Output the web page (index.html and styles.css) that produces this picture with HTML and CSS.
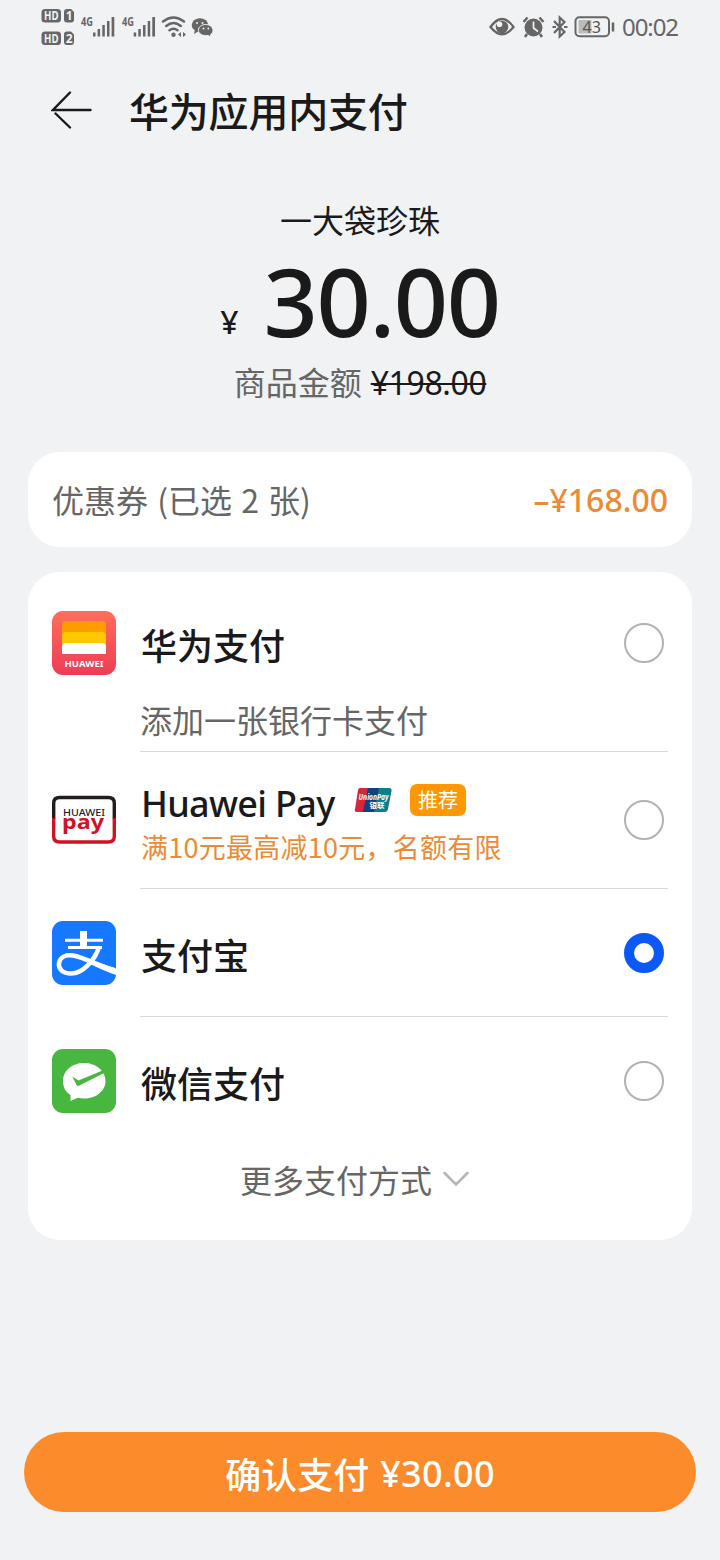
FILE: index.html
```html
<!DOCTYPE html>
<html lang="zh-CN">
<head>
<meta charset="utf-8">
<title>华为应用内支付</title>
<link rel="stylesheet" href="styles.css">
</head>
<body>
<div class="screen">
  <div class="status">
    <svg class="status-left" width="180" height="56" viewBox="0 0 180 56">
      <g fill="#666">
        <rect x="1.5" y="9" width="19.5" height="13.5" rx="3.5"/>
        <path d="M24 12q0-3 3-3h4l3 3v7.500q0 3-3 3h-4q-3 0-3-3z"/>
        <rect x="1.500" y="31.500" width="19.500" height="13.500" rx="3.500"/>
        <path d="M24 34.500q0-3 3-3h4l3 3v7.500q0 3-3 3h-4q-3 0-3-3z"/>
        <g id="bars">
          <rect x="53" y="32.500" width="2.500" height="4"/><rect x="57.600" y="29" width="2.500" height="7.500"/><rect x="62.300" y="25" width="2.500" height="11.500"/><rect x="67" y="21" width="2.500" height="15.500"/><rect x="71.600" y="17" width="2.700" height="19.500"/>
        </g>
        <use href="#bars" x="40.700"/>
        <circle cx="133.500" cy="34.700" r="2.200"/>
        <path d="M138 34.500l3-2.500v5zM146 34.500l-3-2.500v5z"/>
        <ellipse cx="160" cy="25" rx="8.300" ry="6.800"/><path d="M155 29l-1 5 5-3z"/>
      </g>
      <g fill="none" stroke="#666" stroke-width="2.500" stroke-linecap="round">
        <path d="M123 21.500q10.500-8 21 0M126.200 26q7.300-6 14.600 0M129.500 30.200q4-3 8 0"/>
      </g>
      <path d="M165.700 24.500c4.200 0 7.300 2.500 7.300 5.700 0 2-1 3.500-2.500 4.500l.5 2.300-3-1.500c-5 .8-9.600-1.700-9.600-5.300 0-3.200 3.200-5.700 7.300-5.700z" fill="#666" stroke="#f1f2f4" stroke-width="1"/>
      <g fill="#f1f2f4"><circle cx="157" cy="23" r="1"/><circle cx="162.500" cy="23" r="1"/><circle cx="163.500" cy="28.500" r=".9"/><circle cx="168.300" cy="28.500" r=".9"/></g>
      <g class="hd"><text x="4" y="20" textLength="14.500" lengthAdjust="spacingAndGlyphs">HD</text><text x="25.700" y="20">1</text><text x="4" y="42.500" textLength="14.500" lengthAdjust="spacingAndGlyphs">HD</text><text x="25.700" y="42.500">2</text></g>
      <g class="net"><text x="41" y="25.500" textLength="12" lengthAdjust="spacingAndGlyphs">4G</text><text x="82" y="25.500" textLength="12" lengthAdjust="spacingAndGlyphs">4G</text></g>
    </svg>
    <svg class="status-right" width="192" height="56" viewBox="0 0 192 56">
      <path d="M1.500 27q11.500-16 23 0q-11.500 14.500-23 0z" fill="none" stroke="#666" stroke-width="2.300"/>
      <circle cx="13" cy="27" r="6.300" fill="#666"/><circle cx="10.500" cy="24.300" r="2.800" fill="#f1f2f4"/>
      <circle cx="44.500" cy="27.500" r="9" fill="#666"/>
      <path d="M44.500 21.500v6.500l4.500 3.500" stroke="#f1f2f4" stroke-width="1.700" fill="none"/>
      <path d="M34.500 22l4-4.500M54.500 22l-4-4.500M38 34l-2 3M51 34l2 3" stroke="#666" stroke-width="2.500"/>
      <path d="M65 21l10.500 11-4.800 4.500v-19l4.800 4.500L65 33" fill="none" stroke="#666" stroke-width="2.200"/>
      <path d="M63.500 27h3.500M75 27h3.500" stroke="#666" stroke-width="2.200"/>
      <rect x="86.500" y="17.300" width="33.500" height="19" rx="4" fill="none" stroke="#666" stroke-width="2"/>
      <rect x="89.500" y="20" width="13" height="13.500" fill="#bbb"/>
      <path d="M124 22.500v9" stroke="#666" stroke-width="2.500"/>
      <text class="batt" x="93.500" y="33" textLength="18.500" lengthAdjust="spacingAndGlyphs">43</text>
      <text class="time" x="133" y="36" textLength="57">00:02</text>
    </svg>
  </div>

  <div class="header">
    <svg width="42" height="40" viewBox="0 0 42 40" fill="none" stroke="#1a1a1a" stroke-width="2.400" stroke-linecap="round"><path d="M39.500 20H2L19 2.500M4.500 23.500L19 37.500"/></svg>
    <h1 class="header-title">华为应用内支付</h1>
  </div>

  <div class="summary">
    <div class="product">一大袋珍珠</div>
    <div class="price"><span class="yen">¥</span><span class="amount">30.00</span></div>
    <div class="original"><span class="original-label">商品金额</span><s class="original-price">¥198.00</s></div>
  </div>

  <div class="card coupon"><span class="coupon-label">优惠券 (已选 2 张)</span><span class="discount">–¥168.00</span></div>

  <div class="card methods">
    <div class="method first">
      <div class="main">
        <svg class="logo" width="64" height="64" viewBox="0 0 64 64">
          <defs><linearGradient id="red" x1="0" y1="0" x2="0" y2="1"><stop offset="0" stop-color="#ff6e5c"/><stop offset="1" stop-color="#ef3c55"/></linearGradient></defs>
          <rect width="64" height="64" rx="11" fill="url(#red)"/>
          <path d="M10 43V14q0-4 4-4h36q4 0 4 4v29z" fill="#ff9c00"/>
          <path d="M10 43V25q0-4 4-4h36q4 0 4 4v18z" fill="#ffc800"/>
          <path d="M10 43v-7q0-4 4-4h36q4 0 4 4v7z" fill="#fff"/>
          <text class="brand" x="12.500" y="56" textLength="39" lengthAdjust="spacingAndGlyphs">HUAWEI</text>
        </svg>
        <span class="name">华为支付</span><i class="radio"></i>
      </div>
      <div class="add-card">添加一张银行卡支付</div>
    </div>
    <div class="method pay">
      <svg class="logo" width="64" height="50" viewBox="0 0 64 50">
        <path d="M1.700 24V8q0-5.500 6-5.500h48.600q6 0 6 5.500v16" fill="none" stroke="#231c1e" stroke-width="3.400"/>
        <path d="M1.700 23v18.500q0 5.500 6 5.500h48.600q6 0 6-5.500V23" fill="none" stroke="#cf1226" stroke-width="3.400"/>
        <text class="hw" x="11" y="20.500" textLength="42" lengthAdjust="spacingAndGlyphs">HUAWEI</text>
        <text class="pay-word" x="10" y="34" textLength="42" lengthAdjust="spacingAndGlyphs">pay</text>
      </svg>
      <div class="info">
        <div class="line"><span class="name latin">Huawei Pay</span>
          <svg class="union" width="38" height="26" viewBox="0 0 38 26">
            <path d="M6 1h13l-5 24H3q-3 0-2-3L4 3q.5-2 2-2z" fill="#d5263c"/><path d="M14 1h14l-5 24H9z" fill="#10427c"/><path d="M25 1h10q3 0 2.500 3L34 22q-.7 3-3 3H20z" fill="#08818b"/>
            <text class="union-en" x="4.500" y="12.500" textLength="30" lengthAdjust="spacingAndGlyphs">UnionPay</text>
            <text class="union-cn" x="15.500" y="20.500" textLength="15" lengthAdjust="spacingAndGlyphs">银联</text>
          </svg>
          <span class="badge">推荐</span></div>
        <div class="promo">满10元最高减10元，名额有限</div>
      </div>
      <i class="radio"></i>
    </div>
    <div class="method">
      <svg class="logo" width="64" height="64" viewBox="0 0 64 64">
        <rect width="64" height="64" rx="11" fill="#1677ff"/>
        <g fill="none" stroke="#fff"><path d="M31.500 10v16" stroke-width="7"/><path d="M13 19.200h38M16 26.500h34" stroke-width="3"/>
        <path d="M47 26c-4 13-16 26.500-28 26.500C10.500 52.500 6 47.500 7 42c1.200-6.500 7.500-8.500 14-7.500C32 36.500 43 43 62 49" stroke-width="4.500"/></g>
        <path d="M39 38.500Q50 43.500 64 47.500V54Q51 49.500 36 42z" fill="#fff"/>
      </svg>
      <span class="name">支付宝</span><i class="radio checked"></i>
    </div>
    <div class="method last">
      <svg class="logo" width="64" height="64" viewBox="0 0 64 64">
        <rect width="64" height="64" rx="11" fill="#48b740"/>
        <path d="M32 14c12 0 21.500 7.800 21.500 18S44 49.500 32 49.500c-2.300 0-4.300-.2-6.300-.8L18.500 52v-6C13.500 43 11 38 11 32c0-10.200 9-18 21-18z" fill="#fff"/>
        <path d="M20.300 27.500l6.200 4L50.500 21.500q1.300 1 1.700 2.500L26.300 37q-1.300 0-1.700-1z" fill="#48b740"/>
      </svg>
      <span class="name">微信支付</span><i class="radio"></i>
    </div>
    <div class="more">更多支付方式<svg width="28" height="18" viewBox="0 0 28 18" fill="none" stroke="#b5b5b5" stroke-width="2.500" stroke-linecap="round"><path d="M2.500 3L14 14.500 25.500 3"/></svg></div>
  </div>

  <button class="confirm"><span>确认支付</span><span class="confirm-sum">¥30.00</span></button>
</div>
</body>
</html>
```
FILE: styles.css
```css
* { box-sizing: border-box; }
body { margin: 0; background: #f1f2f4; color: #1a1a1a; font-family: "Noto Sans CJK SC", sans-serif; }
.screen { width: 720px; height: 1560px; display: flex; flex-direction: column; white-space: nowrap; }
.status { height: 56px; padding: 0 40px; display: flex; justify-content: space-between; }
.status-right { margin-right: -1px; }
.hd { font: bold 12px "Noto Sans", sans-serif; fill: #f1f2f4; }
.net { font: bold 11.500px "Noto Sans", sans-serif; fill: #666; }
.batt { font: 17px "Noto Sans", sans-serif; fill: #555; }
.time { font: 24px "Noto Sans", sans-serif; fill: #666; }

.header { height: 108px; padding-left: 51px; display: flex; align-items: center; gap: 36px; }
.header-title { margin: 0; font-size: 40px; font-weight: 500; line-height: 60px; letter-spacing: -.2px; }

.summary { height: 288px; padding-top: 31px; display: flex; flex-direction: column; align-items: center; }
.product { height: 50px; font-size: 32px; line-height: 48px; }
.price { height: 112px; font-family: "Noto Sans", sans-serif; line-height: 111px; }
.yen { margin-right: 25px; font-size: 32px; font-weight: 500; line-height: 1; vertical-align: 3px; }
.amount { font-size: 95px; font-weight: 500; letter-spacing: -1.4px; }
.original { display: flex; align-items: baseline; gap: 9px; font-size: 32px; line-height: 48px; }
.original-label { color: #666; }
.original-price { font-family: "Noto Sans", sans-serif; letter-spacing: -.4px; text-decoration-thickness: 2px; }

.card { margin: 0 28px; background: #fff; border-radius: 32px; }
.coupon { height: 95px; padding: 0 24px; display: flex; align-items: center; justify-content: space-between; font-size: 32px; color: #666; }
.coupon-label { padding-bottom: 2px; word-spacing: 2px; }
.discount { font-family: "Noto Sans", sans-serif; font-weight: 500; color: #ec8b34; }

.methods { height: 668px; margin-top: 25px; }
.method { position: relative; height: 128px; padding: 0 28px 0 24px; display: flex; align-items: center; }
.method:not(.last)::after { content: ""; position: absolute; left: 112px; right: 24px; bottom: 0; height: 1px; background: #d8d8d8; }
.method.first { height: 180px; padding-top: 39px; display: block; }
.method.pay { height: 137px; padding-bottom: 2px; }
.main { height: 64px; display: flex; align-items: center; }
.logo { flex: none; margin-right: 25px; }
.name { padding-top: 2px; font-size: 36px; font-weight: 500; line-height: 54px; }
.radio { flex: none; width: 40px; height: 40px; margin-left: auto; border: 2px solid #b2b2b2; border-radius: 50%; }
.radio.checked { border: 10px solid #0a59f7; }
.add-card { padding: 20px 0 0 88px; font-size: 32px; line-height: 48px; color: #666; }
.info { padding-top: 10px; }
.line { width: 325px; height: 44px; display: flex; align-items: center; }
.latin { padding-top: 0; font-family: "Noto Sans", sans-serif; letter-spacing: -.7px; }
.union { margin: -8px 18px 0 auto; }
.union-en { font: italic bold 8px "Noto Sans", sans-serif; fill: #fff; }
.union-cn { font: bold 7px "Noto Sans CJK SC", sans-serif; fill: #fff; }
.badge { width: 56px; height: 32px; margin-top: -7px; border-radius: 7px; background: #ff9800; color: #fff; font-size: 20px; line-height: 31px; text-align: center; }
.promo { font-size: 27px; line-height: 42px; letter-spacing: .25px; color: #ec8b34; }
.brand { font: bold 9.500px "Noto Sans", sans-serif; fill: #fff; }
.hw { font: 500 9.500px "Noto Sans", sans-serif; fill: #231c1e; }
.pay-word { font: bold 19px "Noto Sans", sans-serif; fill: #cf1226; }
.more { height: 67px; display: flex; align-items: center; justify-content: center; gap: 10px; padding-right: 10px; font-size: 32px; color: #666; }

.confirm { height: 80px; margin: 192px 24px 0; padding: 2px 0 0; display: flex; align-items: center; justify-content: center; gap: 11px; border: 0; border-radius: 40px; background: #fb8b2b; color: #fff; font: 500 36px "Noto Sans CJK SC", sans-serif; }
.confirm-sum { font-family: "Noto Sans", sans-serif; letter-spacing: .3px; }
```
